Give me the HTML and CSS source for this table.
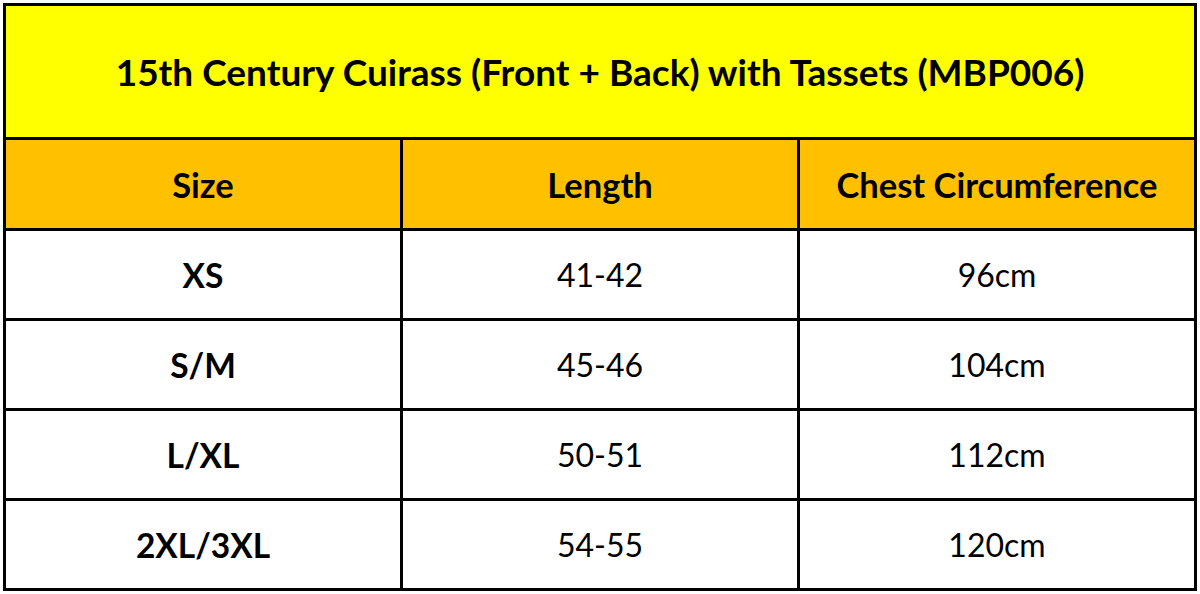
FILE: index.html
```html
<!DOCTYPE html>
<html lang="en">
<head>
<meta charset="utf-8">
<title>Size Chart</title>
<link rel="stylesheet" href="styles.css">
</head>
<body>
<div class="chart">
  <div class="cell title">15th Century Cuirass (Front + Back) with Tassets (MBP006)</div>
  <div class="cell head">Size</div>
  <div class="cell head">Length</div>
  <div class="cell head">Chest Circumference</div>
  <div class="cell size">XS</div>
  <div class="cell val">41-42</div>
  <div class="cell val">96cm</div>
  <div class="cell size">S/M</div>
  <div class="cell val">45-46</div>
  <div class="cell val">104cm</div>
  <div class="cell size">L/XL</div>
  <div class="cell val">50-51</div>
  <div class="cell val">112cm</div>
  <div class="cell size">2XL/3XL</div>
  <div class="cell val">54-55</div>
  <div class="cell val">120cm</div>
</div>
</body>
</html>
```
FILE: styles.css
```css
html, body {
  margin: 0;
  padding: 0;
  background: #ffffff;
}
.chart {
  margin: 3px;
  width: 1194px;
  box-sizing: border-box;
  padding: 3px;
  gap: 3px;
  background: #000000;
  display: grid;
  grid-template-columns: repeat(3, 1fr);
  grid-template-rows: 131px 88px 87px 87px 87px 87px;
  font-family: Lato, "Open Sans", sans-serif;
  color: #000000;
}
.cell {
  display: flex;
  align-items: center;
  justify-content: center;
  background: #ffffff;
  white-space: nowrap;
}
.title {
  grid-column: 1 / 4;
  background: #ffff00;
  font-weight: 700;
  font-size: 37px;
}
.head {
  background: #ffc000;
  font-weight: 700;
  font-size: 34.5px;
}
.size {
  font-weight: 700;
  font-size: 33.5px;
}
.val {
  font-weight: 400;
  font-size: 32px;
}
```
